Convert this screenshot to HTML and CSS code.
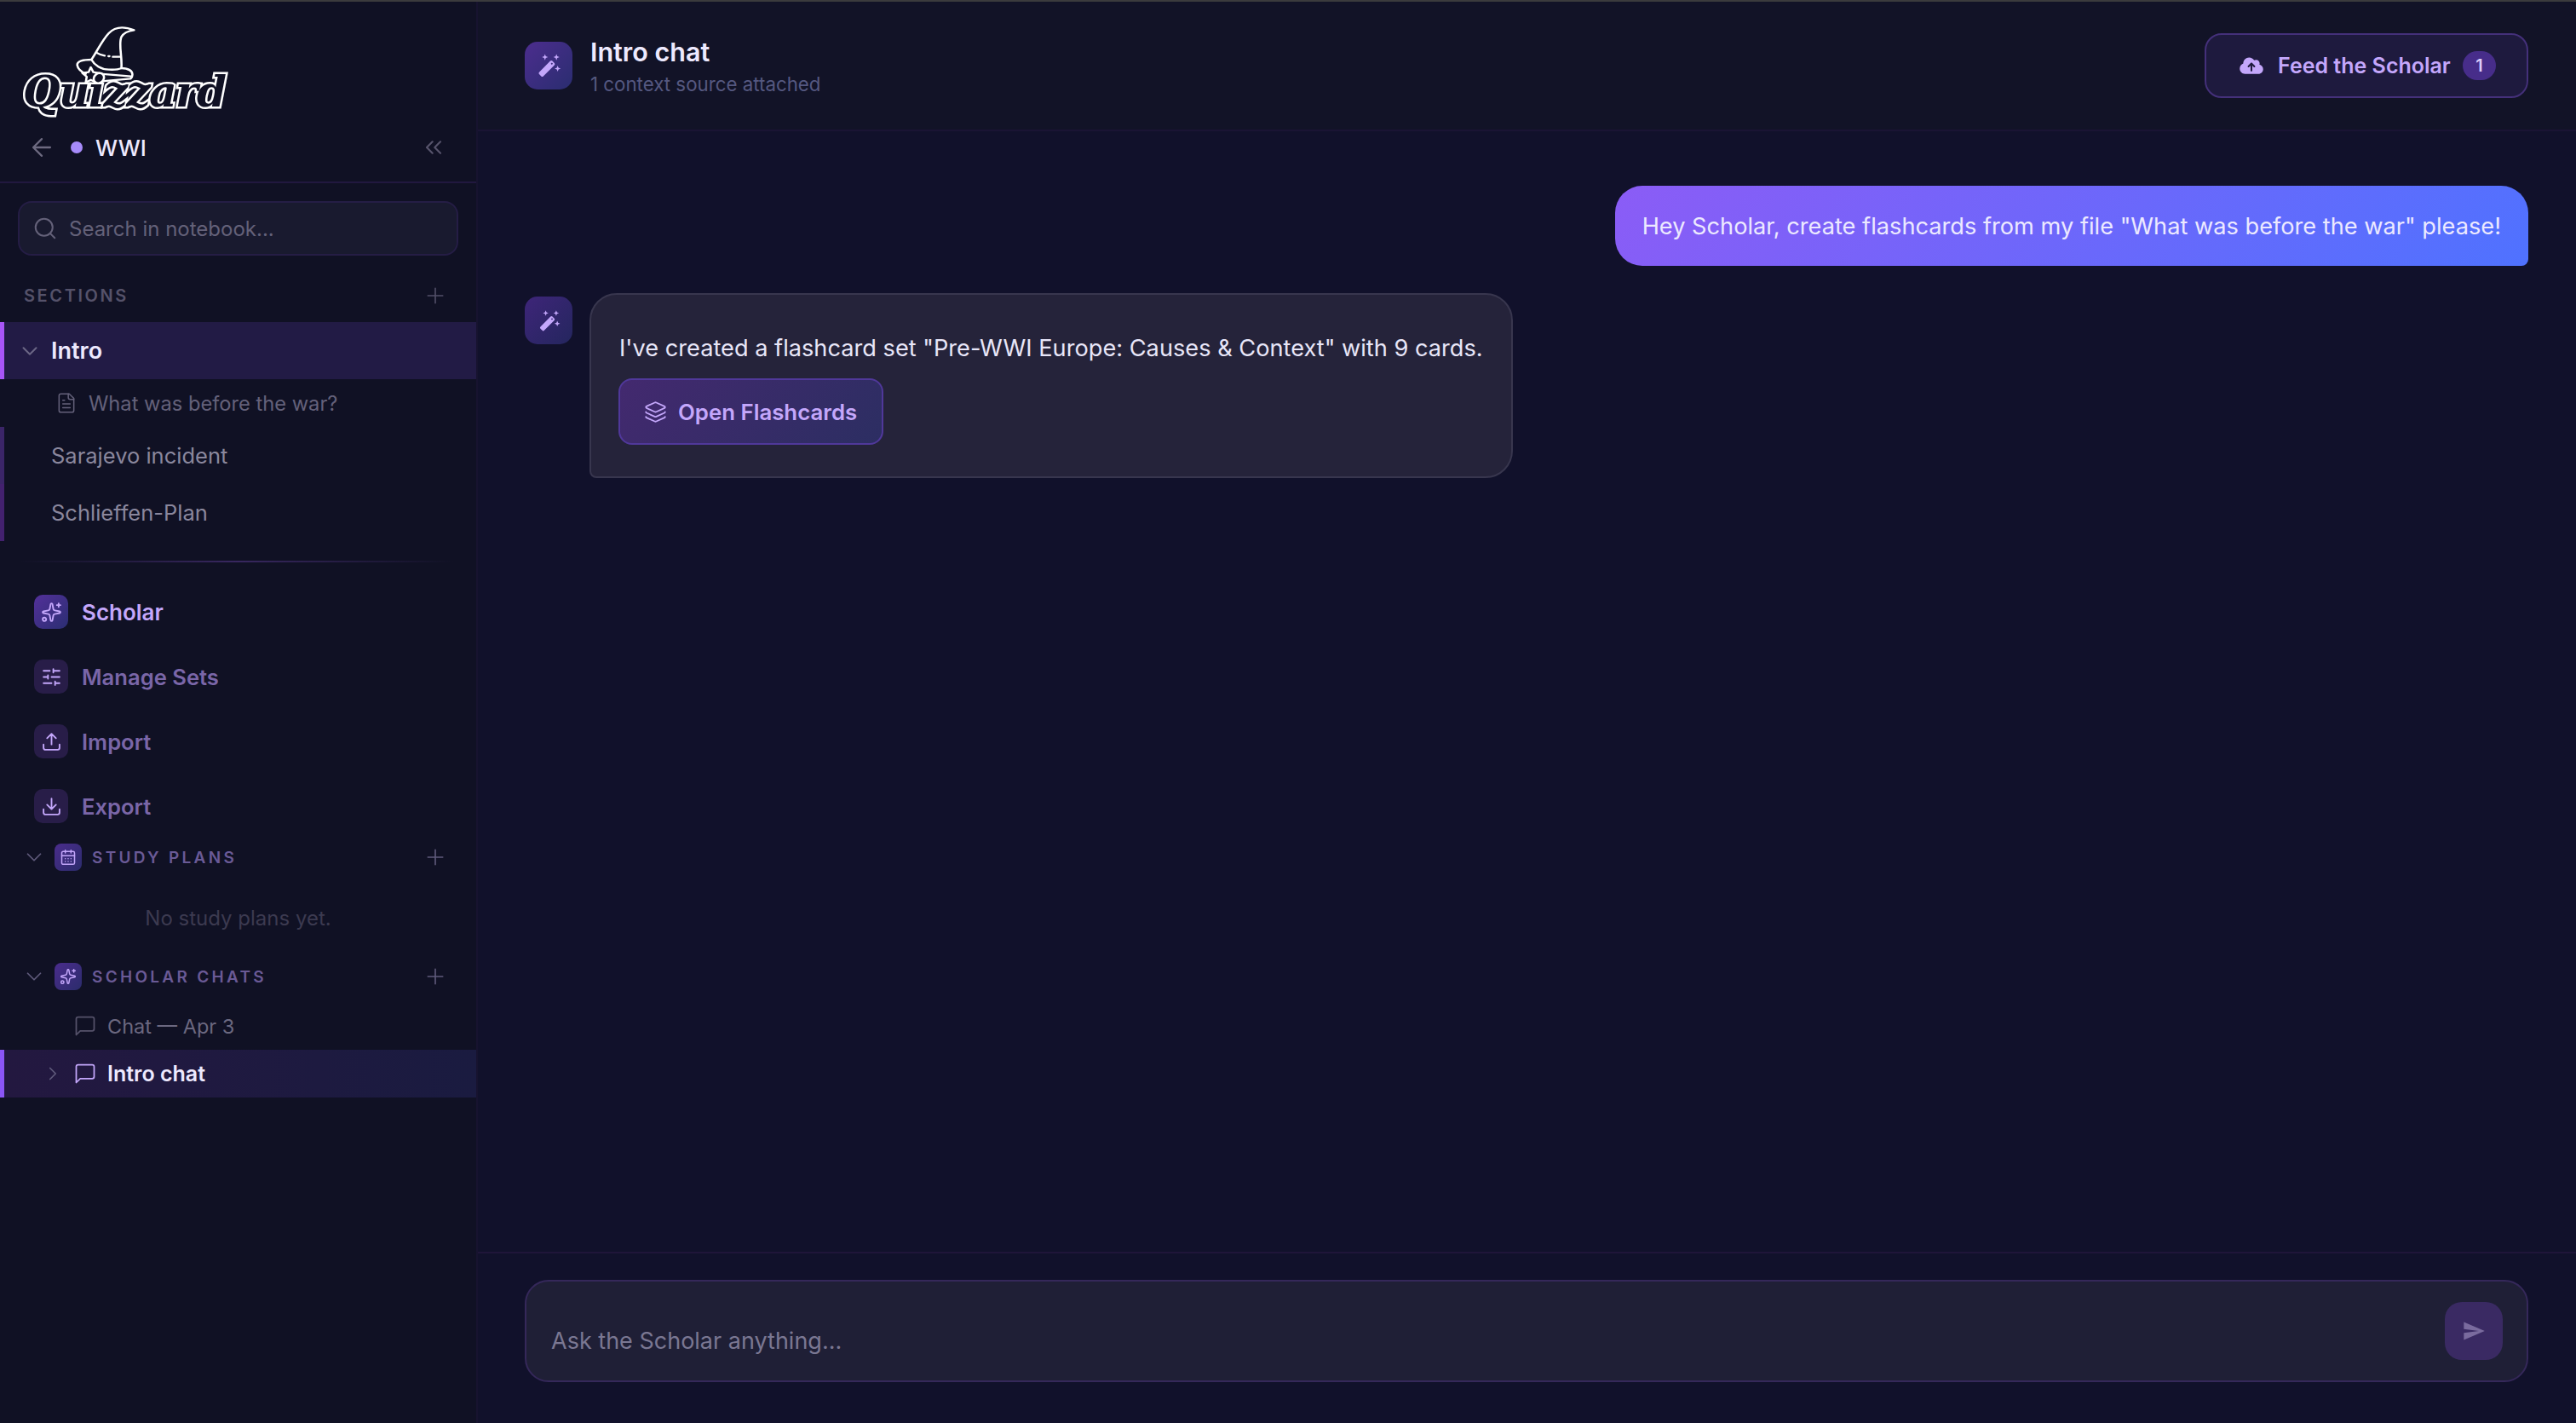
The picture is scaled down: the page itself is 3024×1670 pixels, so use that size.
FILE: index.html
```html
<!DOCTYPE html>
<html lang="en">
<head>
    <meta charset="UTF-8">
    <meta name="viewport" content="width=device-width, initial-scale=1.0">
    <title>Quizzard - Intro chat</title>
    <link rel="stylesheet" href="styles.css">
</head>
<body>
    <svg class="sprites" width="0" height="0" aria-hidden="true">
        <symbol id="i-sparkles" viewBox="0 0 24 24"><path d="M11.017 2.814a1 1 0 0 1 1.966 0l1.051 5.558a2 2 0 0 0 1.594 1.594l5.558 1.051a1 1 0 0 1 0 1.966l-5.558 1.051a2 2 0 0 0-1.594 1.594l-1.051 5.558a1 1 0 0 1-1.966 0l-1.051-5.558a2 2 0 0 0-1.594-1.594l-5.558-1.051a1 1 0 0 1 0-1.966l5.558-1.051a2 2 0 0 0 1.594-1.594z"/><path d="M20 2v4M22 4h-4"/><circle cx="4" cy="20" r="2"/></symbol>
        <symbol id="i-chevron-down" viewBox="0 0 24 24"><path d="m6 9 6 6 6-6"/></symbol>
        <symbol id="i-chevron-right" viewBox="0 0 24 24"><path d="m9 18 6-6-6-6"/></symbol>
        <symbol id="i-plus" viewBox="0 0 24 24"><path d="M5 12h14M12 5v14"/></symbol>
        <symbol id="i-message" viewBox="0 0 24 24"><path d="M21 15a2 2 0 0 1-2 2H7l-4 4V5a2 2 0 0 1 2-2h14a2 2 0 0 1 2 2z"/></symbol>
        <symbol id="i-wand" viewBox="0 0 24 24"><path d="M13.400 8.200a1.200 1.200 0 0 1 1.700 0l1.700 1.700a1.200 1.200 0 0 1 0 1.700L7.600 20.800a1.200 1.200 0 0 1-1.700 0l-1.700-1.700a1.200 1.200 0 0 1 0-1.700z"/><path fill="#3b2a78" d="M13.800 10.400l.9-.9.9.9-.9.9z"/><path d="M9 2.500l.7 1.800 1.800.7-1.800.7L9 7.500l-.7-1.800L6.500 5l1.800-.7zM18.500 2.500l.7 1.800 1.800.7-1.800.7-.7 1.800-.7-1.800L16 5l1.800-.7zM19.500 12l.7 1.800 1.800.7-1.800.7-.7 1.800-.7-1.800-1.800-.7 1.800-.7z"/></symbol>
    </svg>

    <div class="top-strip"></div>
    <div class="app">
        <aside class="sidebar">
            <div class="logo">
                <svg class="logo-hat" viewBox="235 85 200 210" preserveAspectRatio="none" fill="none" stroke="#fff" stroke-width="7" stroke-linecap="round" stroke-linejoin="round">
                    <path d="M425 101C395 88 365 88 345 112C325 135 308 175 290 205C300 225 320 240 345 240C360 241 375 240 385 235C388 190 375 150 385 125C392 110 405 104 425 101Z"/>
                    <path d="M305 180C312 185 320 188 332 191M344 193h3M358 195h22"/>
                    <path d="M290 205C265 205 243 210 245 225C247 238 258 248 272 255M385 235C405 236 420 242 420 258C420 264 418 268 414 272L322 281M318 255L416 264"/>
                    <path d="M288 232l8 17 20 4-14 13 4 20-18-10-16 9 3-20-14-13 20-3z"/>
                </svg>
                <span class="logo-word">Quizzard</span>
            </div>

            <div class="notebook-bar">
                <svg class="icon notebook-back" viewBox="0 0 24 24"><path d="m12 19-7-7 7-7M19 12H5"/></svg>
                <span class="notebook-dot"></span>
                <span class="notebook-name">WWI</span>
                <svg class="icon notebook-collapse" viewBox="0 0 24 24"><path d="m11 17-5-5 5-5M18 17l-5-5 5-5"/></svg>
            </div>

            <div class="search-wrap">
                <div class="search">
                    <svg class="icon search-icon" viewBox="0 0 24 24"><circle cx="11" cy="11" r="8"/><path d="m21 21-4.300-4.300"/></svg>
                    <span>Search in notebook...</span>
                </div>
            </div>

            <div class="sections-head">
                <span>SECTIONS</span>
                <svg class="icon plus"><use href="#i-plus"/></svg>
            </div>

            <div class="section-row section-active">
                <svg class="icon section-chevron"><use href="#i-chevron-down"/></svg>
                <span>Intro</span>
            </div>
            <div class="section-file">
                <svg class="icon" viewBox="0 0 24 24"><path d="M15 2H6a2 2 0 0 0-2 2v16a2 2 0 0 0 2 2h12a2 2 0 0 0 2-2V7z"/><path d="M14 2v4a2 2 0 0 0 2 2h4M16 13H8M16 17H8M10 9H8"/></svg>
                <span>What was before the war?</span>
            </div>
            <div class="section-row section-plain bar-a"><span>Sarajevo incident</span></div>
            <div class="section-row section-plain bar-b"><span>Schlieffen-Plan</span></div>

            <div class="side-divider"></div>

            <nav class="side-nav">
                <div class="nav-item nav-active">
                    <span class="nav-icon"><svg class="icon"><use href="#i-sparkles"/></svg></span>
                    <span>Scholar</span>
                </div>
                <div class="nav-item">
                    <span class="nav-icon"><svg class="icon" viewBox="0 0 24 24"><path d="M10 5H3M12 19H3M14 3v4M16 17v4M21 12h-9M21 19h-5M21 5h-7M8 10v4M8 12H3"/></svg></span>
                    <span>Manage Sets</span>
                </div>
                <div class="nav-item">
                    <span class="nav-icon"><svg class="icon" viewBox="0 0 24 24"><path d="M12 3v12M17 8l-5-5-5 5M21 15v4a2 2 0 0 1-2 2H5a2 2 0 0 1-2-2v-4"/></svg></span>
                    <span>Import</span>
                </div>
                <div class="nav-item">
                    <span class="nav-icon"><svg class="icon" viewBox="0 0 24 24"><path d="M12 15V3M21 15v4a2 2 0 0 1-2 2H5a2 2 0 0 1-2-2v-4M7 10l5 5 5-5"/></svg></span>
                    <span>Export</span>
                </div>
            </nav>

            <div class="group-head group-plans">
                <svg class="icon group-chevron"><use href="#i-chevron-down"/></svg>
                <span class="group-icon"><svg class="icon" viewBox="0 0 24 24"><path d="M8 2v4M16 2v4M3 10h18M8 14h.01M12 14h.01M16 14h.01M8 18h.01M12 18h.01M16 18h.01"/><rect x="3" y="4" width="18" height="18" rx="2"/></svg></span>
                <span class="group-label">STUDY PLANS</span>
                <svg class="icon plus"><use href="#i-plus"/></svg>
            </div>
            <p class="group-empty">No study plans yet.</p>

            <div class="group-head group-chats">
                <svg class="icon group-chevron"><use href="#i-chevron-down"/></svg>
                <span class="group-icon"><svg class="icon"><use href="#i-sparkles"/></svg></span>
                <span class="group-label">SCHOLAR CHATS</span>
                <svg class="icon plus"><use href="#i-plus"/></svg>
            </div>
            <div class="chat-row">
                <svg class="icon chat-icon"><use href="#i-message"/></svg>
                <span>Chat — Apr 3</span>
            </div>
            <div class="chat-row chat-active">
                <svg class="icon chat-chevron"><use href="#i-chevron-right"/></svg>
                <svg class="icon chat-icon"><use href="#i-message"/></svg>
                <span>Intro chat</span>
            </div>
        </aside>

        <main class="chat">
            <header class="chat-head">
                <span class="wand-badge head-badge"><svg class="icon"><use href="#i-wand"/></svg></span>
                <div class="chat-title">
                    <h1>Intro chat</h1>
                    <p>1 context source attached</p>
                </div>
                <button class="feed-btn">
                    <svg class="feed-icon" viewBox="0 0 640 512"><path d="M144 480C64.500 480 0 415.500 0 336c0-62.800 40.200-116.200 96.200-135.900c-.1-2.700-.2-5.400-.2-8.100c0-88.400 71.600-160 160-160c59.300 0 111 32.200 138.700 80.200C409.900 102 428.300 96 448 96c53 0 96 43 96 96c0 12.200-2.300 23.800-6.400 34.600C596 238.400 640 290.100 640 352c0 70.700-57.300 128-128 128H144zm79-217c-9.400 9.400-9.400 24.600 0 33.900s24.600 9.400 33.900 0l39-39V392c0 13.300 10.700 24 24 24s24-10.700 24-24V257.900l39 39c9.400 9.400 24.600 9.400 33.900 0s9.400-24.600 0-33.900l-80-80c-9.400-9.400-24.600-9.400-33.900 0l-80 80z"/></svg>
                    <span>Feed the Scholar</span>
                    <span class="feed-count">1</span>
                </button>
            </header>

            <section class="messages">
                <div class="msg-user">Hey Scholar, create flashcards from my file "What was before the war" please!</div>
                <div class="msg-bot">
                    <span class="wand-badge bot-badge"><svg class="icon"><use href="#i-wand"/></svg></span>
                    <div class="bot-bubble">
                        <p>I've created a flashcard set "Pre-WWI Europe: Causes &amp; Context" with 9 cards.</p>
                        <button class="open-btn">
                            <svg class="icon" viewBox="0 0 24 24"><path d="M12.830 2.180a2 2 0 0 0-1.660 0L2.600 6.080a1 1 0 0 0 0 1.830l8.580 3.910a2 2 0 0 0 1.660 0l8.580-3.900a1 1 0 0 0 0-1.830z"/><path d="M2 12a1 1 0 0 0 .58.91l8.600 3.910a2 2 0 0 0 1.650 0l8.580-3.900A1 1 0 0 0 22 12"/><path d="M2 17a1 1 0 0 0 .58.91l8.600 3.910a2 2 0 0 0 1.650 0l8.580-3.900A1 1 0 0 0 22 17"/></svg>
                            <span>Open Flashcards</span>
                        </button>
                    </div>
                </div>
            </section>

            <footer class="composer-wrap">
                <div class="composer">
                    <span class="composer-text">Ask the Scholar anything...</span>
                    <button class="send-btn">
                        <svg viewBox="0 0 24 24"><path d="M2.010 21 23 12 2.010 3 2 10l15 2-15 2z"/></svg>
                    </button>
                </div>
            </footer>
        </main>
    </div>
</body>
</html>
```

FILE: styles.css
```css
:root {
    --bg-side: #101124;
    --bg-main: #11112b;
    --bg-head: #121327;
    --line: #21183f;
    --lilac: #c4a7fb;
    --text-strong: #ede9fe;
    --text-dim: #8a879d;
    --text-faint: #646179;
    --text-nav: #7a66a8;
}

* {
    margin: 0;
    padding: 0;
    box-sizing: border-box;
}

html, body {
    height: 100%;
    overflow: hidden;
}

body {
    font-family: Inter, "Noto Sans", sans-serif;
    background: var(--bg-main);
    color: var(--text-strong);
}

.sprites {
    position: absolute;
}

.top-strip {
    height: 2px;
    background: #3b3b3d;
}

.app {
    display: flex;
    height: 1668px;
}

.icon {
    display: block;
    fill: none;
    stroke: currentColor;
    stroke-width: 1.6;
    stroke-linecap: round;
    stroke-linejoin: round;
    flex-shrink: 0;
}

/* Sidebar */
.sidebar {
    width: 561px;
    flex-shrink: 0;
    background: var(--bg-side);
    border-right: 2px solid #17132f;
    display: flex;
    flex-direction: column;
}

.logo {
    height: 133px;
    flex-shrink: 0;
    padding: 28px 0 0 27px;
    display: flex;
    flex-direction: column;
    align-items: flex-start;
}

.logo-hat {
    width: 74px;
    height: 70px;
    margin-left: 60px;
    flex-shrink: 0;
}

.logo-word {
    font-family: "DejaVu Serif", serif;
    font-weight: 700;
    font-style: italic;
    font-size: 50px;
    line-height: 44px;
    letter-spacing: -1.5px;
    margin-top: -14px;
    color: var(--bg-side);
    -webkit-text-stroke: 5px #fff;
    paint-order: stroke fill;
}

.notebook-bar {
    height: 80px;
    flex-shrink: 0;
    padding: 0 34px 2px 32px;
    display: flex;
    align-items: center;
    border-bottom: 2px solid var(--line);
}

.notebook-back {
    width: 34px;
    height: 34px;
    color: #6d6a80;
}

.notebook-dot {
    width: 14px;
    height: 14px;
    margin-left: 17px;
    border-radius: 50%;
    background: #a78bfa;
}

.notebook-name {
    margin-left: 15px;
    font-size: 26px;
    font-weight: 500;
}

.notebook-collapse {
    margin-left: auto;
    width: 32px;
    height: 32px;
    color: #57546c;
}

.search-wrap {
    padding: 21px 21px 0;
}

.search {
    height: 64px;
    padding: 0 15px;
    display: flex;
    align-items: center;
    gap: 13px;
    background: #191a2f;
    border: 2px solid #251d45;
    border-radius: 16px;
    font-size: 24px;
    color: var(--text-faint);
}

.search-icon {
    width: 30px;
    height: 30px;
}

.sections-head {
    height: 78px;
    padding: 16px 33px 0 28px;
    display: flex;
    align-items: center;
    justify-content: space-between;
    font-size: 20px;
    font-weight: 600;
    letter-spacing: 2.6px;
    color: #55526a;
}

.plus {
    width: 30px;
    height: 30px;
    stroke-width: 1.3;
    color: #524f68;
}

.section-row {
    height: 67px;
    flex-shrink: 0;
    display: flex;
    align-items: center;
    font-size: 25.5px;
}

.section-active {
    padding-left: 15px;
    gap: 10px;
    background: #221b45;
    border-left: 5px solid #a855f7;
    color: var(--text-strong);
    font-size: 27px;
    font-weight: 600;
}

.section-chevron {
    width: 30px;
    height: 30px;
    color: #6b6685;
}

.section-file {
    height: 56px;
    flex-shrink: 0;
    padding-left: 65px;
    display: flex;
    align-items: center;
    gap: 13px;
    font-size: 23.7px;
    color: #64617a;
}

.section-file .icon {
    width: 26px;
    height: 26px;
    stroke-width: 1.4;
}

.section-plain {
    color: var(--text-dim);
    font-weight: 400;
    border-left: 5px solid transparent;
    padding-left: 55px;
}

.bar-a {
    border-left-color: #3b2568;
}

.bar-b {
    border-left-color: #43216f;
}

.side-divider {
    height: 2px;
    flex-shrink: 0;
    margin: 23px 26px 0 22px;
    background: linear-gradient(90deg, transparent, #38275f 50%, transparent);
}

.side-nav {
    padding-top: 38px;
    display: flex;
    flex-direction: column;
    gap: 36px;
}

.nav-item {
    height: 40px;
    padding-left: 40px;
    display: flex;
    align-items: center;
    gap: 16px;
    font-size: 25.6px;
    font-weight: 600;
    color: var(--text-nav);
}

.nav-active {
    color: var(--lilac);
    font-size: 26px;
}

.nav-icon {
    width: 40px;
    height: 40px;
    border-radius: 10px;
    background: #281d48;
    color: var(--lilac);
    display: flex;
    align-items: center;
    justify-content: center;
}

.nav-icon .icon {
    width: 25px;
    height: 25px;
    stroke-width: 1.8;
}

.nav-active .nav-icon {
    background: linear-gradient(135deg, #53309a, #2b2e72);
}

.group-head {
    height: 32px;
    flex-shrink: 0;
    padding: 0 33px 0 25px;
    display: flex;
    align-items: center;
}

.group-plans {
    margin-top: 24px;
}

.group-chats {
    margin-top: 18px;
}

.group-chevron {
    width: 30px;
    height: 30px;
    stroke-width: 1.4;
    color: #5f5a7b;
}

.group-icon {
    width: 32px;
    height: 32px;
    margin-left: 9px;
    border-radius: 8px;
    background: linear-gradient(135deg, #4a2c8c, #2b2c6c);
    color: var(--lilac);
    display: flex;
    align-items: center;
    justify-content: center;
}

.group-icon .icon {
    width: 20px;
    height: 20px;
    stroke-width: 1.8;
}

.group-label {
    margin-left: 12px;
    font-size: 19px;
    font-weight: 600;
    letter-spacing: 3.3px;
    color: #6a5a96;
}

.group-head .plus {
    margin-left: auto;
    color: #5f5a7b;
}

.group-empty {
    height: 90px;
    padding-top: 41px;
    flex-shrink: 0;
    text-align: center;
    font-size: 24px;
    color: #3c3a50;
}

.chat-row {
    height: 56px;
    flex-shrink: 0;
    padding-left: 86px;
    display: flex;
    align-items: center;
    gap: 12px;
    font-size: 23.5px;
    color: #6b6880;
}

.group-chats + .chat-row {
    margin-top: 14px;
}

.chat-icon {
    width: 28px;
    height: 28px;
    stroke-width: 1.5;
    color: #55526a;
}

.chat-active {
    padding-left: 44px;
    gap: 0;
    background: linear-gradient(90deg, #231840, #1a1b40);
    border-left: 5px solid #8b55f6;
    color: var(--text-strong);
    font-size: 25px;
    font-weight: 600;
}

.chat-chevron {
    width: 26px;
    height: 26px;
    margin-right: 11px;
    color: #5f5a7b;
}

.chat-active .chat-icon {
    color: var(--lilac);
    margin-right: 12px;
}

/* Main chat column */
.chat {
    flex: 1;
    min-width: 0;
    display: flex;
    flex-direction: column;
}

.chat-head {
    height: 152px;
    flex-shrink: 0;
    padding: 0 56px 0 55px;
    display: flex;
    align-items: center;
    background: var(--bg-head);
    border-bottom: 2px solid #1a1434;
}

.wand-badge {
    display: flex;
    align-items: center;
    justify-content: center;
    flex-shrink: 0;
    color: var(--lilac);
    background: linear-gradient(135deg, #4c2d8e, #2a2d70);
}

.wand-badge .icon {
    fill: currentColor;
    stroke: none;
}

.head-badge {
    width: 56px;
    height: 56px;
    border-radius: 15px;
}

.head-badge .icon {
    width: 34px;
    height: 34px;
}

.chat-title {
    margin: 2px 0 0 21px;
}

.chat-title h1 {
    font-size: 30.5px;
    font-weight: 600;
    line-height: 36px;
}

.chat-title p {
    margin-top: 6px;
    font-size: 22.3px;
    line-height: 28px;
    color: #555880;
}

.feed-btn {
    margin-left: auto;
    width: 380px;
    height: 76px;
    display: flex;
    align-items: center;
    padding: 0 36px 0 39px;
    background: #1e1a3e;
    border: 2px solid #44307a;
    border-radius: 20px;
    color: var(--lilac);
    font-family: inherit;
    font-size: 25px;
    font-weight: 600;
    white-space: nowrap;
}

.feed-icon {
    width: 28px;
    height: 22px;
    fill: currentColor;
    margin-right: 17px;
}

.feed-count {
    margin-left: auto;
    min-width: 39px;
    height: 34px;
    border-radius: 17px;
    background: #472d8a;
    color: #dccdfc;
    display: flex;
    align-items: center;
    justify-content: center;
    font-size: 20px;
}

.messages {
    flex: 1;
    min-height: 0;
    padding: 64px 56px 0 55px;
    display: flex;
    flex-direction: column;
}

.msg-user {
    align-self: flex-end;
    height: 94px;
    padding: 0 32px;
    display: flex;
    align-items: center;
    border-radius: 32px 32px 8px 32px;
    background: linear-gradient(135deg, #8b5cf6, #4f72ff);
    font-size: 27.2px;
    color: #ece9ff;
}

.msg-bot {
    margin-top: 32px;
    display: flex;
    align-items: flex-start;
    gap: 20px;
}

.bot-badge {
    width: 56px;
    height: 56px;
    margin-top: 4px;
    border-radius: 15px;
    background: linear-gradient(135deg, #3e2579, #24265e);
}

.bot-badge .icon {
    width: 31px;
    height: 31px;
}

.bot-bubble {
    width: 1084px;
    height: 217px;
    padding: 45px 32px 0 33px;
    background: #25233a;
    border: 2px solid #38364e;
    border-radius: 32px 32px 32px 8px;
    font-size: 27.2px;
    color: #e8e6f8;
}

.bot-bubble p {
    line-height: 36px;
    white-space: nowrap;
}

.open-btn {
    margin: 17px 0 0 -1px;
    width: 311px;
    height: 78px;
    padding-left: 28px;
    display: flex;
    align-items: center;
    gap: 13px;
    background: linear-gradient(135deg, #43296f, #2c2e62);
    border: 2px solid #50389a;
    border-radius: 16px;
    color: var(--lilac);
    font-family: inherit;
    font-size: 25.8px;
    font-weight: 600;
    white-space: nowrap;
}

.open-btn .icon {
    width: 27px;
    height: 27px;
    stroke-width: 1.6;
}

.composer-wrap {
    height: 201px;
    flex-shrink: 0;
    padding: 31px 56px 0 55px;
    border-top: 2px solid #1f1539;
}

.composer {
    height: 120px;
    padding: 0 28px 0 29px;
    display: flex;
    align-items: center;
    justify-content: space-between;
    background: #1f1f36;
    border: 2px solid #35285a;
    border-radius: 28px;
}

.composer-text {
    margin-top: 22px;
    font-size: 27px;
    color: #7a7792;
}

.send-btn {
    width: 68px;
    height: 68px;
    display: flex;
    align-items: center;
    justify-content: center;
    background: #3a2a63;
    border: none;
    border-radius: 20px;
}

.send-btn svg {
    width: 28px;
    height: 28px;
    fill: #7a6b9e;
}
```
